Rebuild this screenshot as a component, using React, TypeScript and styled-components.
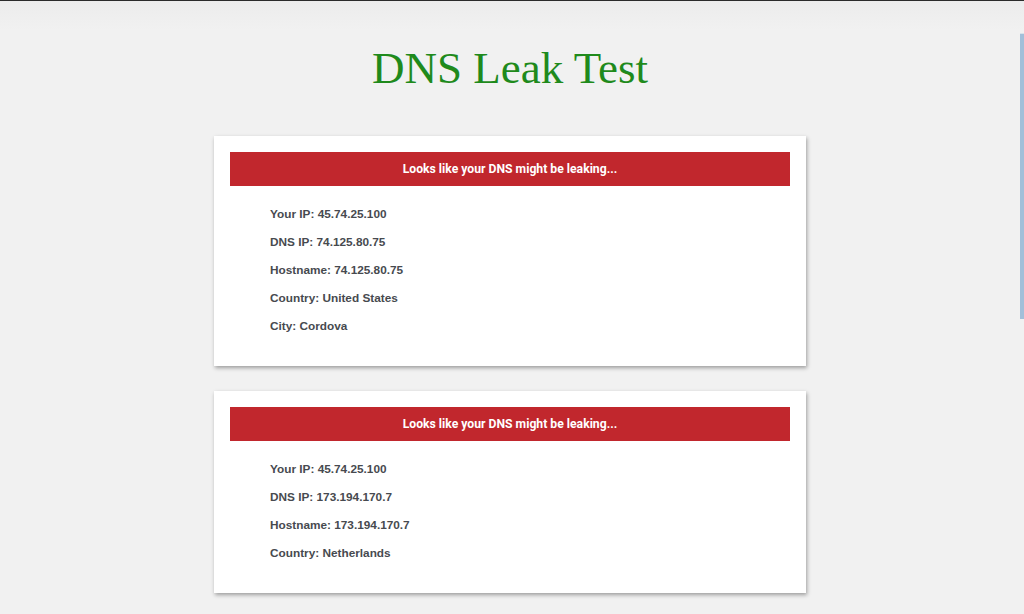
import React from "react";
import styled, { createGlobalStyle } from "styled-components";

const Global = createGlobalStyle`
  html, body { margin: 0; padding: 0; background: #f1f1f1; }
  body { font-family: "Liberation Sans", Arial, sans-serif; overflow: hidden; }
`;

const Page = styled.div`
  display: flex;
  min-height: 614px;
  border-top: 1px solid #2b2b2b;
  background: linear-gradient(#ececec 0, #f1f1f1 30px);
  box-sizing: border-box;
`;

const Main = styled.main`
  flex: 1;
  display: flex;
  flex-direction: column;
  align-items: center;
`;

const Gutter = styled.div`
  width: 4px;
  display: flex;
  flex-direction: column;
`;

const Thumb = styled.div`
  margin-top: 32px;
  height: 285px;
  background: #a2bfd9;
  border-top: 1px solid #d8e2ea;
`;

const Title = styled.h1`
  margin: 42px 0 43px;
  font-family: "Liberation Serif", "Times New Roman", serif;
  font-weight: normal;
  font-size: 45px;
  line-height: 50px;
  color: #1f8a1c;
`;

const Card = styled.section`
  width: 592px;
  box-sizing: border-box;
  padding: 16px;
  margin-bottom: 25px;
  background: #fff;
  box-shadow: 1px 2px 4px rgba(0, 0, 0, 0.35);
`;

const Banner = styled.div`
  height: 34px;
  line-height: 35px;
  background: #c1272d;
  color: #fff;
  text-align: center;
  font-family: Roboto, "Liberation Sans", sans-serif;
  font-size: 12.2px;
  font-weight: bold;
`;

const List = styled.ul`
  list-style: none;
  margin: 0;
  padding: 14px 0 10px 40px;
`;

const Item = styled.li`
  line-height: 28px;
  font-size: 11.8px;
  font-weight: bold;
  color: #474a4f;
`;

const results: string[][] = [
  [
    "Your IP: 45.74.25.100",
    "DNS IP: 74.125.80.75",
    "Hostname: 74.125.80.75",
    "Country: United States",
    "City: Cordova",
  ],
  [
    "Your IP: 45.74.25.100",
    "DNS IP: 173.194.170.7",
    "Hostname: 173.194.170.7",
    "Country: Netherlands",
  ],
];

export default function App() {
  return (
    <>
      <Global />
      <Page>
        <Main>
          <Title>DNS Leak Test</Title>
          {results.map((lines, i) => (
            <Card key={i}>
              <Banner>Looks like your DNS might be leaking...</Banner>
              <List>
                {lines.map((l) => (
                  <Item key={l}>{l}</Item>
                ))}
              </List>
            </Card>
          ))}
        </Main>
        <Gutter>
          <Thumb />
        </Gutter>
      </Page>
    </>
  );
}
